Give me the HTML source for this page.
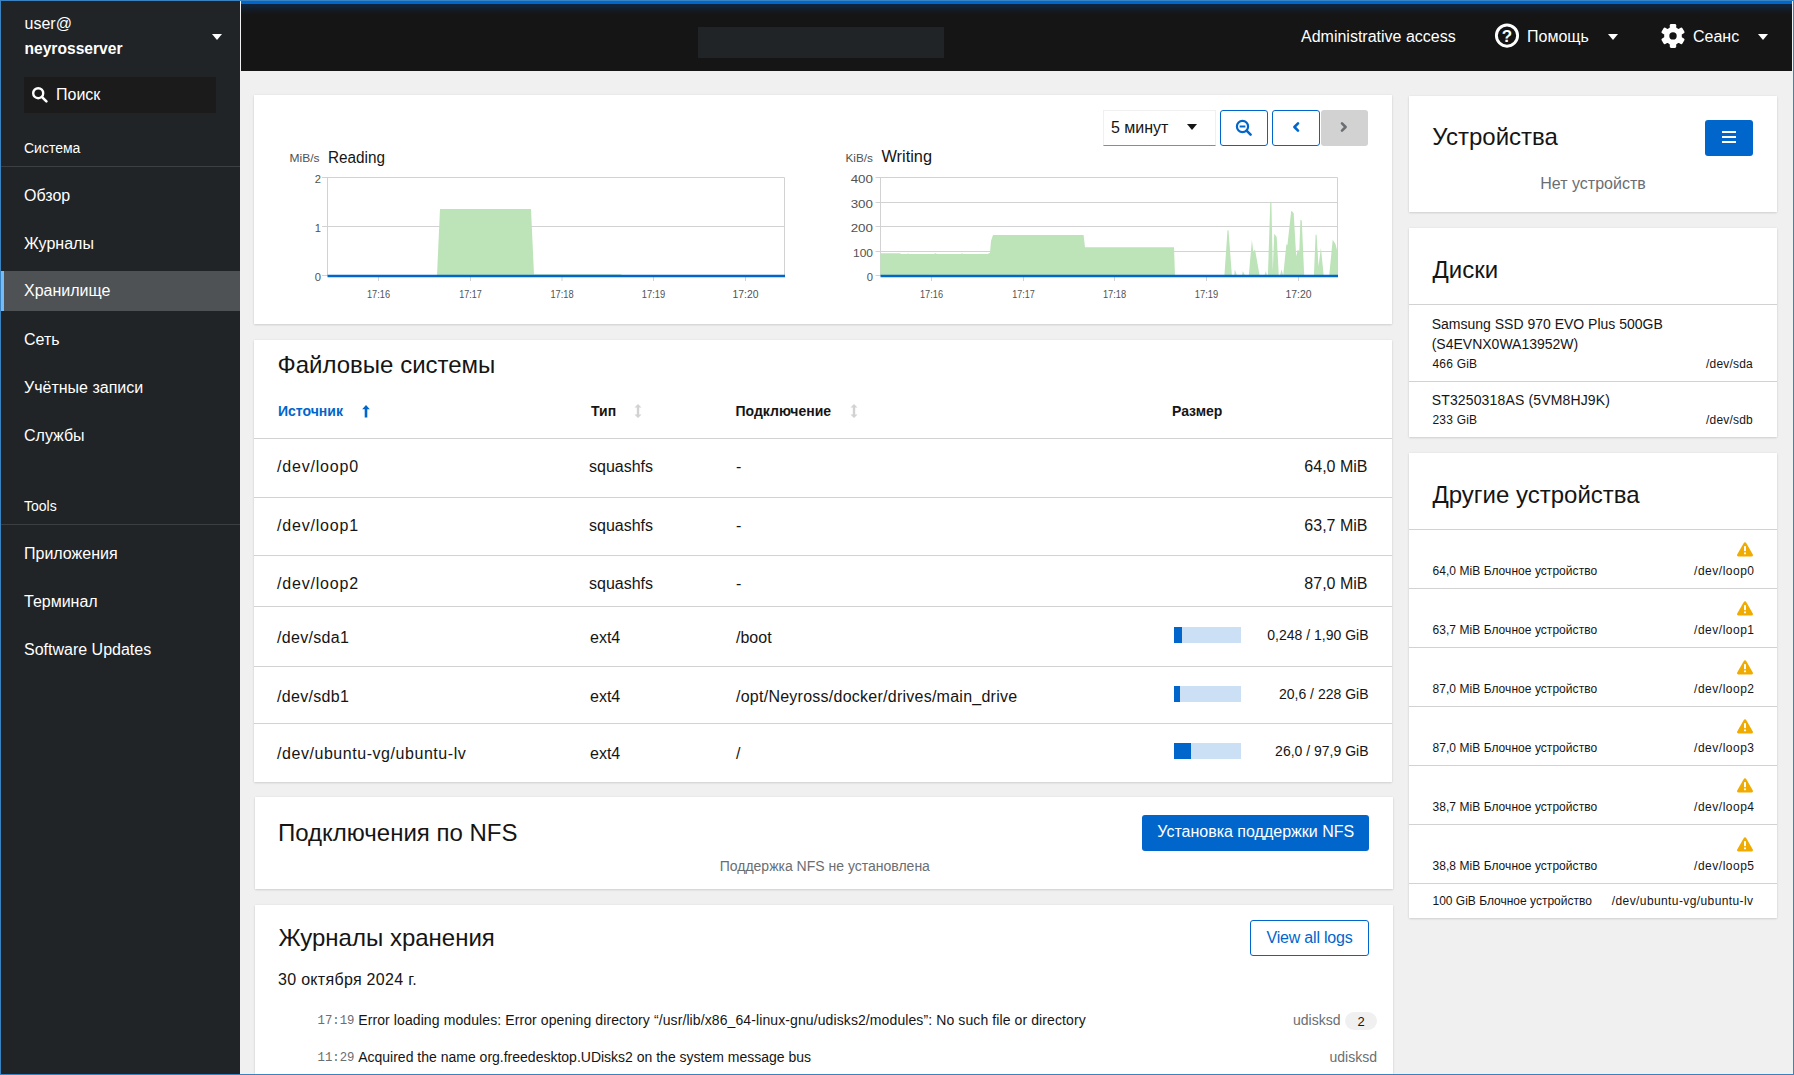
<!DOCTYPE html>
<html><head><meta charset="utf-8">
<style>
html,body{margin:0;padding:0}
body{width:1794px;height:1075px;overflow:hidden;position:relative;background:#3a83c3;font-family:"Liberation Sans",sans-serif;}
.a{position:absolute}
.t{position:absolute;white-space:nowrap;line-height:1;font-family:"Liberation Sans",sans-serif}
#win{position:absolute;left:0;top:0;width:1794px;height:1075px;background:#f0f0f0;overflow:hidden}
.bd{position:absolute;background:#3a83c3;z-index:50}
#side{position:absolute;left:1px;top:1px;width:239px;height:1073px;background:#212427}
#head{position:absolute;left:241px;top:1px;width:1551px;height:70px;background:#151515}
.card{position:absolute;background:#fff;box-shadow:0 1px 2px 0 rgba(3,3,3,.12),0 0 2px 0 rgba(3,3,3,.06)}
.nav{color:#fff;font-size:16px}
.hr{position:absolute;height:1px;background:#d2d2d2}
.g{color:#6a6e73}
</style></head>
<body>
<div id="win">
<!-- SIDEBAR -->
<div id="side">
  <div class="t nav" style="left:23.5px;top:15px;font-size:16px">user@</div>
  <div class="t nav" style="left:23.5px;top:39.5px;font-size:15.6px;font-weight:bold">neyrosserver</div>
  <svg class="a" style="left:210px;top:32px" width="12" height="8"><path d="M1 1h10L6 7z" fill="#fff"/></svg>
  <div class="a" style="left:23px;top:76px;width:192px;height:36px;background:#1b1b1b"></div>
  <svg class="a" style="left:30px;top:85px" width="18" height="18" viewBox="0 0 18 18"><circle cx="7.2" cy="7.2" r="5" fill="none" stroke="#fff" stroke-width="2.4"/><path d="M10.8 10.8l4.6 4.6" stroke="#fff" stroke-width="2.6" stroke-linecap="round"/></svg>
  <div class="t nav" style="left:55px;top:86px">Поиск</div>
  <div class="t nav" style="left:23px;top:140px;font-size:14px">Система</div>
  <div class="a" style="left:0;top:165px;width:239px;height:1px;background:#3c3f42"></div>
  <div class="t nav" style="left:23px;top:187px">Обзор</div>
  <div class="t nav" style="left:23px;top:235px">Журналы</div>
  <div class="a" style="left:0;top:270px;width:239px;height:40px;background:#4f5255"></div>
  <div class="a" style="left:0;top:270px;width:3px;height:40px;background:#73bcf7"></div>
  <div class="t nav" style="left:23px;top:281.5px">Хранилище</div>
  <div class="t nav" style="left:23px;top:331px">Сеть</div>
  <div class="t nav" style="left:23px;top:379px">Учётные записи</div>
  <div class="t nav" style="left:23px;top:427px">Службы</div>
  <div class="t nav" style="left:23px;top:498px;font-size:14px">Tools</div>
  <div class="a" style="left:0;top:523px;width:239px;height:1px;background:#3c3f42"></div>
  <div class="t nav" style="left:23px;top:545px">Приложения</div>
  <div class="t nav" style="left:23px;top:593px">Терминал</div>
  <div class="t nav" style="left:23px;top:641px">Software Updates</div>
</div>
<!-- HEADER -->
<div id="head">
  <div class="a" style="left:0;top:0;width:1551px;height:3px;background:#0066cc"></div>
  <div class="a" style="left:0;top:3px;width:1551px;height:10px;background:linear-gradient(#0f2440,#151515)"></div>
  <div class="a" style="left:457px;top:26px;width:246px;height:31px;background:#212427"></div>
  <div class="t" style="left:1060px;top:28px;color:#fff;font-size:16px">Administrative access</div>
  <svg class="a" style="left:1252px;top:22px" width="28" height="26" viewBox="0 0 28 26"><circle cx="14" cy="12.6" r="10.6" fill="none" stroke="#fff" stroke-width="2.9"/><text x="14" y="18.6" text-anchor="middle" font-family="Liberation Sans" font-weight="bold" font-size="17" fill="#fff">?</text></svg>
  <div class="t" style="left:1286px;top:28px;color:#fff;font-size:16px">Помощь</div>
  <svg class="a" style="left:1366px;top:32px" width="12" height="8"><path d="M1 1h10L6 7z" fill="#fff"/></svg>
  <svg class="a" style="left:1419px;top:21.4px" width="26" height="28" viewBox="-13 -13.9 26 28"><g fill="#fff"><circle r="8.9"/><rect x="-3.2" y="-12" width="6.4" height="6" rx="1.3" transform="rotate(0)"/><rect x="-3.2" y="-12" width="6.4" height="6" rx="1.3" transform="rotate(60)"/><rect x="-3.2" y="-12" width="6.4" height="6" rx="1.3" transform="rotate(120)"/><rect x="-3.2" y="-12" width="6.4" height="6" rx="1.3" transform="rotate(180)"/><rect x="-3.2" y="-12" width="6.4" height="6" rx="1.3" transform="rotate(240)"/><rect x="-3.2" y="-12" width="6.4" height="6" rx="1.3" transform="rotate(300)"/></g><circle r="3.7" fill="#151515"/></svg>
  <div class="t" style="left:1452px;top:28px;color:#fff;font-size:16px">Сеанс</div>
  <svg class="a" style="left:1516px;top:32px" width="12" height="8"><path d="M1 1h10L6 7z" fill="#fff"/></svg>
</div>
<!-- MAIN -->
<!-- CARD 1: charts -->
<div class="card" style="left:254px;top:95px;width:1138px;height:229px"></div>
<div class="a" style="left:1103px;top:110px;width:111px;height:34px;border:1px solid #f0f0f0;border-bottom-color:#8a8d90;background:#fff"></div>
<div class="t" style="left:1111px;top:120px;font-size:16px;color:#151515">5 минут</div>
<svg class="a" style="left:1186px;top:123px" width="12" height="8"><path d="M1 1h10L6 7z" fill="#151515"/></svg>
<div class="a" style="left:1220px;top:110px;width:46px;height:34px;border:1px solid #0066cc;border-radius:3px;background:#fff"></div>
<svg class="a" style="left:1234px;top:118px" width="20" height="20" viewBox="0 0 20 20"><circle cx="8.5" cy="8.5" r="5.6" fill="none" stroke="#0066cc" stroke-width="2.2"/><path d="M5.6 8.5h5.8" stroke="#0066cc" stroke-width="2"/><path d="M12.6 12.6l4 4" stroke="#0066cc" stroke-width="2.6" stroke-linecap="round"/></svg>
<div class="a" style="left:1272px;top:110px;width:46px;height:34px;border:1px solid #0066cc;border-radius:3px;background:#fff"></div>
<svg class="a" style="left:1290px;top:120px" width="12" height="14" viewBox="0 0 12 14"><path d="M8 3.4L4.4 7L8 10.6" fill="none" stroke="#0066cc" stroke-width="2.6" stroke-linecap="round" stroke-linejoin="round"/></svg>
<div class="a" style="left:1321px;top:110px;width:47px;height:36px;border-radius:3px;background:#d2d2d2"></div>
<svg class="a" style="left:1338px;top:120px" width="12" height="14" viewBox="0 0 12 14"><path d="M4 3.4L7.6 7L4 10.6" fill="none" stroke="#6a6e73" stroke-width="2.6" stroke-linecap="round" stroke-linejoin="round"/></svg>

<svg class="a" style="left:0;top:0" width="1794" height="1075" viewBox="0 0 1794 1075">
 <g font-family="Liberation Sans" fill="#4f5255" font-size="12">
  <text x="289.5" y="162" font-size="11.5" fill="#4f5255" textLength="30" lengthAdjust="spacingAndGlyphs">MiB/s</text>
  <text x="328" y="163" font-size="16" fill="#151515" textLength="57" lengthAdjust="spacingAndGlyphs">Reading</text>
  <text x="845.5" y="162" font-size="11.5" fill="#4f5255" textLength="27.5" lengthAdjust="spacingAndGlyphs">KiB/s</text>
  <text x="881.5" y="162" font-size="16" fill="#151515" textLength="50.5" lengthAdjust="spacingAndGlyphs">Writing</text>
 </g>
 <!-- reading chart -->
 <g stroke="#d2d2d2" stroke-width="1" fill="none">
  <path d="M322 177.5H784.5M322 226.5H784.5M322 275.5H784.5M327.5 177.5V275.5M784.5 177.5V275.5"/>
  <path d="M378.5 277V281M470.5 277V281M562 277V281M653.5 277V281M745.5 277V281"/>
 </g>
 <path fill="#bde3b9" d="M437 275.5L440 209H531L534 274.3H621L622 275.5Z"/>
 <path d="M327.5 276H785" stroke="#0066cc" stroke-width="2.6"/>
 <g font-family="Liberation Sans" fill="#4f5255" font-size="11.2" text-anchor="end">
  <text x="321" y="183">2</text><text x="321" y="232">1</text><text x="321" y="281">0</text>
 </g>
 <g font-family="Liberation Sans" fill="#4f5255" font-size="11" text-anchor="middle">
  <text textLength="23" lengthAdjust="spacingAndGlyphs" x="378.5" y="298">17:16</text><text textLength="22.5" lengthAdjust="spacingAndGlyphs" x="470.5" y="298">17:17</text><text textLength="23.2" lengthAdjust="spacingAndGlyphs" x="562" y="298">17:18</text><text textLength="23.4" lengthAdjust="spacingAndGlyphs" x="653.5" y="298">17:19</text><text textLength="26" lengthAdjust="spacingAndGlyphs" x="745.5" y="298">17:20</text>
 </g>
 <!-- writing chart -->
 <g stroke="#d2d2d2" stroke-width="1" fill="none">
  <path d="M875.5 177.5H1337.5M875.5 202.5H1337.5M875.5 226.5H1337.5M875.5 251.5H1337.5M875.5 275.5H1337.5M880.5 177.5V275.5M1337.5 177.5V275.5"/>
  <path d="M931.5 277V281M1023.5 277V281M1114.5 277V281M1206.5 277V281M1298.5 277V281"/>
 </g>
 <path fill="#bde3b9" d="M880.5 275.5V253.2H900L901 254H907.5L908 253.2L909 254H934L935.5 253.2L937 254H961L962 253.2L963 254H987.7L990 252.7L991 241L993 235.1H1083.6L1085 247.2H1174L1175 275.5Z
 M1224.4 275.5L1227.5 230.2L1228.5 230.2L1231.9 275.5Z M1234.2 275.5L1234.8 269.6L1237 275.5Z M1242 275.5L1242.8 271L1245 275.5Z
 M1248.8 275.5L1251.9 240.1L1253.3 252L1255 249.4L1259.6 275.5Z M1264.5 275.5L1265.8 271L1267 275.5Z
 M1267.9 275.5L1270.3 202.3L1271.4 202.3L1272.8 271L1274.2 233.8L1276.7 236.9L1278.8 275.5Z M1280 275.5L1281.5 269.5L1283.2 275.5Z
 M1283.2 275.5L1286.4 244.1L1287.4 245.2L1291.2 211.1L1292 211.3L1293.7 213.2L1296.2 256.4L1297.6 250.1L1299.3 250.8L1300.4 219.9L1301.3 219.9L1301.8 220.9L1304.2 275.5Z
 M1313.9 275.5L1315.6 234.8L1316.6 234.8L1318.5 266.2L1320.9 248L1323.7 275.5Z M1329.2 275.5L1332.7 239.7L1335.5 243.9L1337 250V275.5Z"/>
 <path d="M880.5 276H1338" stroke="#0066cc" stroke-width="2.6"/>
 <g font-family="Liberation Sans" fill="#4f5255" font-size="11.2" text-anchor="end">
  <text x="873" y="183.2" textLength="22.3" lengthAdjust="spacingAndGlyphs">400</text><text x="873" y="207.6" textLength="22.3" lengthAdjust="spacingAndGlyphs">300</text><text x="873" y="232" textLength="22.3" lengthAdjust="spacingAndGlyphs">200</text><text x="873" y="256.6" textLength="20" lengthAdjust="spacingAndGlyphs">100</text><text x="873" y="281">0</text>
 </g>
 <g font-family="Liberation Sans" fill="#4f5255" font-size="11" text-anchor="middle">
  <text textLength="23" lengthAdjust="spacingAndGlyphs" x="931.5" y="298">17:16</text><text textLength="22.5" lengthAdjust="spacingAndGlyphs" x="1023.5" y="298">17:17</text><text textLength="23.2" lengthAdjust="spacingAndGlyphs" x="1114.5" y="298">17:18</text><text textLength="23.4" lengthAdjust="spacingAndGlyphs" x="1206.5" y="298">17:19</text><text textLength="26" lengthAdjust="spacingAndGlyphs" x="1298.5" y="298">17:20</text>
 </g>
</svg>

<!-- CARD 2: filesystems -->
<div class="card" style="left:254px;top:340px;width:1138px;height:442px"></div>
<div class="t" style="left:277.5px;top:353px;font-size:24px;color:#151515">Файловые системы</div>
<div class="t" style="left:278px;top:404px;font-size:14px;font-weight:bold;color:#0066cc">Источник</div>
<svg class="a" style="left:361px;top:404px" width="10" height="15" viewBox="0 0 10 15"><path d="M5 1L1.2 5.2h2.5V13.6h2.6V5.2h2.5z" fill="#0066cc"/></svg>
<div class="t" style="left:591px;top:404px;font-size:14px;font-weight:bold;color:#151515">Тип</div>
<svg class="a" style="left:633px;top:403px" width="10" height="16" viewBox="0 0 10 16"><path d="M5 1L1.5 4.6h2.3v6.8H1.5L5 15l3.5-3.6H6.2V4.6h2.3z" fill="#d2d2d2"/></svg>
<div class="t" style="left:735.5px;top:404px;font-size:14px;font-weight:bold;color:#151515">Подключение</div>
<svg class="a" style="left:849px;top:403px" width="10" height="16" viewBox="0 0 10 16"><path d="M5 1L1.5 4.6h2.3v6.8H1.5L5 15l3.5-3.6H6.2V4.6h2.3z" fill="#d2d2d2"/></svg>
<div class="t" style="left:1172px;top:404px;font-size:14px;font-weight:bold;color:#151515">Размер</div>
<div class="hr" style="left:254px;top:438px;width:1138px"></div>
<div class="hr" style="left:254px;top:497px;width:1138px"></div>
<div class="hr" style="left:254px;top:555px;width:1138px"></div>
<div class="hr" style="left:254px;top:606px;width:1138px"></div>
<div class="hr" style="left:254px;top:666px;width:1138px"></div>
<div class="hr" style="left:254px;top:723px;width:1138px"></div>
<div style="color:#151515;font-size:16px">
<div class="t" style="left:277px;top:458.5px;letter-spacing:.8px">/dev/loop0</div>
<div class="t" style="left:589px;top:458.5px">squashfs</div>
<div class="t" style="left:736px;top:458.5px">-</div>
<div class="t" style="right:426.5px;top:458.5px">64,0 MiB</div>
<div class="t" style="left:277px;top:517.5px;letter-spacing:.8px">/dev/loop1</div>
<div class="t" style="left:589px;top:517.5px">squashfs</div>
<div class="t" style="left:736px;top:517.5px">-</div>
<div class="t" style="right:426.5px;top:517.5px">63,7 MiB</div>
<div class="t" style="left:277px;top:575.5px;letter-spacing:.8px">/dev/loop2</div>
<div class="t" style="left:589px;top:575.5px">squashfs</div>
<div class="t" style="left:736px;top:575.5px">-</div>
<div class="t" style="right:426.5px;top:575.5px">87,0 MiB</div>
<div class="t" style="left:277px;top:629.5px;letter-spacing:.3px">/dev/sda1</div>
<div class="t" style="left:590px;top:629.5px">ext4</div>
<div class="t" style="left:736px;top:629.5px">/boot</div>
<div class="t" style="left:277px;top:688.5px;letter-spacing:.3px">/dev/sdb1</div>
<div class="t" style="left:590px;top:688.5px">ext4</div>
<div class="t" style="left:736px;top:688.5px;letter-spacing:.25px">/opt/Neyross/docker/drives/main_drive</div>
<div class="t" style="left:277px;top:746px;letter-spacing:.55px">/dev/ubuntu-vg/ubuntu-lv</div>
<div class="t" style="left:590px;top:746px">ext4</div>
<div class="t" style="left:736px;top:746px">/</div>
</div>
<div class="a" style="left:1174px;top:627px;width:67px;height:16px;background:#cce0f5"></div><div class="a" style="left:1174px;top:627px;width:8px;height:16px;background:#0066cc"></div>
<div class="a" style="left:1174px;top:686px;width:67px;height:16px;background:#cce0f5"></div><div class="a" style="left:1174px;top:686px;width:6px;height:16px;background:#0066cc"></div>
<div class="a" style="left:1174px;top:743px;width:67px;height:16px;background:#cce0f5"></div><div class="a" style="left:1174px;top:743px;width:17px;height:16px;background:#0066cc"></div>
<div style="color:#151515;font-size:14px">
<div class="t" style="right:425.5px;top:628px">0,248 / 1,90 GiB</div>
<div class="t" style="right:425.5px;top:687px">20,6 / 228 GiB</div>
<div class="t" style="right:425.5px;top:744px">26,0 / 97,9 GiB</div>
</div>

<!-- CARD 3: NFS -->
<div class="card" style="left:255px;top:797px;width:1138px;height:92px"></div>
<div class="t" style="left:278px;top:820.5px;font-size:24px;color:#151515">Подключения по NFS</div>
<div class="a" style="left:1142px;top:815px;width:227px;height:36px;background:#0066cc;border-radius:3px"></div>
<div class="t" style="left:1157.3px;top:824.2px;font-size:16px;color:#fff">Установка поддержки NFS</div>
<div class="t g" style="left:719.7px;top:858.8px;font-size:14px">Поддержка NFS не установлена</div>
<!-- CARD 4: logs -->
<div class="card" style="left:255px;top:905px;width:1138px;height:220px"></div>
<div class="t" style="left:278.4px;top:926.2px;font-size:24px;color:#151515">Журналы хранения</div>
<div class="a" style="left:1250px;top:920px;width:117px;height:34px;border:1px solid #0066cc;border-radius:3px"></div>
<div class="t" style="left:1266.5px;top:929.6px;font-size:16px;color:#0066cc;letter-spacing:-.2px">View all logs</div>
<div class="t" style="left:278px;top:971.7px;font-size:16px;color:#151515;letter-spacing:.3px">30 октября 2024 г.</div>
<div class="t" style="left:317.5px;top:1014.8px;font-size:12.3px;font-family:'Liberation Mono',monospace;color:#6a6e73">17:19</div>
<div class="t" style="left:358.2px;top:1013.4px;font-size:14px;color:#151515;letter-spacing:.1px">Error loading modules: Error opening directory “/usr/lib/x86_64-linux-gnu/udisks2/modules”: No such file or directory</div>
<div class="t g" style="right:453.5px;top:1013.4px;font-size:14px">udisksd</div>
<div class="a" style="left:1345px;top:1012px;width:32px;height:18px;border-radius:9px;background:#f0f0f0"></div>
<div class="t" style="left:1345px;width:32px;text-align:center;top:1014.5px;font-size:13px;color:#151515">2</div>
<div class="t" style="left:317.5px;top:1051.5px;font-size:12.3px;font-family:'Liberation Mono',monospace;color:#6a6e73">11:29</div>
<div class="t" style="left:358.2px;top:1050.1px;font-size:14px;color:#151515">Acquired the name org.freedesktop.UDisks2 on the system message bus</div>
<div class="t g" style="right:417px;top:1050.1px;font-size:14px">udisksd</div>

<!-- RIGHT R1 -->
<div class="card" style="left:1409px;top:96px;width:368px;height:116px"></div>
<div class="t" style="left:1432.3px;top:125.4px;font-size:24px;color:#151515">Устройства</div>
<div class="a" style="left:1705px;top:120px;width:48px;height:36px;background:#0066cc;border-radius:3px"></div>
<div class="a" style="left:1722px;top:131px;width:14px;height:2px;background:#fff"></div>
<div class="a" style="left:1722px;top:136px;width:14px;height:2px;background:#fff"></div>
<div class="a" style="left:1722px;top:141px;width:14px;height:2px;background:#fff"></div>
<div class="t g" style="left:1540.3px;top:175.5px;font-size:16px">Нет устройств</div>
<!-- RIGHT R2 -->
<div class="card" style="left:1409px;top:228px;width:368px;height:209px"></div>
<div class="t" style="left:1432.6px;top:258.3px;font-size:24px;color:#151515">Диски</div>
<div class="hr" style="left:1409px;top:304px;width:368px"></div>
<div class="t" style="left:1431.7px;top:316.6px;font-size:14px;color:#151515">Samsung SSD 970 EVO Plus 500GB</div>
<div class="t" style="left:1431.7px;top:337.1px;font-size:14px;color:#151515">(S4EVNX0WA13952W)</div>
<div class="t" style="left:1432.5px;top:357.8px;font-size:12px;color:#151515;letter-spacing:.2px">466 GiB</div>
<div class="t" style="right:41px;top:357.8px;font-size:12px;color:#151515;letter-spacing:.2px">/dev/sda</div>
<div class="hr" style="left:1409px;top:381px;width:368px"></div>
<div class="t" style="left:1431.7px;top:393.3px;font-size:14px;color:#151515;letter-spacing:.15px">ST3250318AS (5VM8HJ9K)</div>
<div class="t" style="left:1432.5px;top:414px;font-size:12px;color:#151515;letter-spacing:.2px">233 GiB</div>
<div class="t" style="right:41px;top:414px;font-size:12px;color:#151515;letter-spacing:.2px">/dev/sdb</div>
<!-- RIGHT R3 -->
<div class="card" style="left:1409px;top:453px;width:368px;height:465px"></div>
<div class="t" style="left:1432.5px;top:483px;font-size:24px;color:#151515">Другие устройства</div>
<div class="hr" style="left:1409px;top:529px;width:368px"></div>
<svg class="a" style="left:1736px;top:541px" width="18" height="16" viewBox="0 0 18 16"><path d="M9 1.2c.5 0 .9.3 1.2.7l6.6 11.6c.5.9-.1 1.9-1.1 1.9H2.3c-1 0-1.6-1-1.1-1.9L7.8 1.9c.3-.4.7-.7 1.2-.7z" fill="#f0ab00"/><rect x="8" y="5" width="2" height="5.2" rx=".6" fill="#fff"/><circle cx="9" cy="12.3" r="1.1" fill="#fff"/></svg>
<div class="t" style="left:1432.5px;top:565.34px;font-size:12px;color:#151515;letter-spacing:.05px">64,0 MiB Блочное устройство</div>
<div class="t" style="right:39.5px;top:565.34px;font-size:12px;color:#151515;letter-spacing:.5px">/dev/loop0</div>
<div class="hr" style="left:1409px;top:588px;width:368px"></div>
<svg class="a" style="left:1736px;top:600px" width="18" height="16" viewBox="0 0 18 16"><path d="M9 1.2c.5 0 .9.3 1.2.7l6.6 11.6c.5.9-.1 1.9-1.1 1.9H2.3c-1 0-1.6-1-1.1-1.9L7.8 1.9c.3-.4.7-.7 1.2-.7z" fill="#f0ab00"/><rect x="8" y="5" width="2" height="5.2" rx=".6" fill="#fff"/><circle cx="9" cy="12.3" r="1.1" fill="#fff"/></svg>
<div class="t" style="left:1432.5px;top:624.34px;font-size:12px;color:#151515;letter-spacing:.05px">63,7 MiB Блочное устройство</div>
<div class="t" style="right:39.5px;top:624.34px;font-size:12px;color:#151515;letter-spacing:.5px">/dev/loop1</div>
<div class="hr" style="left:1409px;top:647px;width:368px"></div>
<svg class="a" style="left:1736px;top:659px" width="18" height="16" viewBox="0 0 18 16"><path d="M9 1.2c.5 0 .9.3 1.2.7l6.6 11.6c.5.9-.1 1.9-1.1 1.9H2.3c-1 0-1.6-1-1.1-1.9L7.8 1.9c.3-.4.7-.7 1.2-.7z" fill="#f0ab00"/><rect x="8" y="5" width="2" height="5.2" rx=".6" fill="#fff"/><circle cx="9" cy="12.3" r="1.1" fill="#fff"/></svg>
<div class="t" style="left:1432.5px;top:683.34px;font-size:12px;color:#151515;letter-spacing:.05px">87,0 MiB Блочное устройство</div>
<div class="t" style="right:39.5px;top:683.34px;font-size:12px;color:#151515;letter-spacing:.5px">/dev/loop2</div>
<div class="hr" style="left:1409px;top:706px;width:368px"></div>
<svg class="a" style="left:1736px;top:718px" width="18" height="16" viewBox="0 0 18 16"><path d="M9 1.2c.5 0 .9.3 1.2.7l6.6 11.6c.5.9-.1 1.9-1.1 1.9H2.3c-1 0-1.6-1-1.1-1.9L7.8 1.9c.3-.4.7-.7 1.2-.7z" fill="#f0ab00"/><rect x="8" y="5" width="2" height="5.2" rx=".6" fill="#fff"/><circle cx="9" cy="12.3" r="1.1" fill="#fff"/></svg>
<div class="t" style="left:1432.5px;top:742.34px;font-size:12px;color:#151515;letter-spacing:.05px">87,0 MiB Блочное устройство</div>
<div class="t" style="right:39.5px;top:742.34px;font-size:12px;color:#151515;letter-spacing:.5px">/dev/loop3</div>
<div class="hr" style="left:1409px;top:765px;width:368px"></div>
<svg class="a" style="left:1736px;top:777px" width="18" height="16" viewBox="0 0 18 16"><path d="M9 1.2c.5 0 .9.3 1.2.7l6.6 11.6c.5.9-.1 1.9-1.1 1.9H2.3c-1 0-1.6-1-1.1-1.9L7.8 1.9c.3-.4.7-.7 1.2-.7z" fill="#f0ab00"/><rect x="8" y="5" width="2" height="5.2" rx=".6" fill="#fff"/><circle cx="9" cy="12.3" r="1.1" fill="#fff"/></svg>
<div class="t" style="left:1432.5px;top:801.34px;font-size:12px;color:#151515;letter-spacing:.05px">38,7 MiB Блочное устройство</div>
<div class="t" style="right:39.5px;top:801.34px;font-size:12px;color:#151515;letter-spacing:.5px">/dev/loop4</div>
<div class="hr" style="left:1409px;top:824px;width:368px"></div>
<svg class="a" style="left:1736px;top:836px" width="18" height="16" viewBox="0 0 18 16"><path d="M9 1.2c.5 0 .9.3 1.2.7l6.6 11.6c.5.9-.1 1.9-1.1 1.9H2.3c-1 0-1.6-1-1.1-1.9L7.8 1.9c.3-.4.7-.7 1.2-.7z" fill="#f0ab00"/><rect x="8" y="5" width="2" height="5.2" rx=".6" fill="#fff"/><circle cx="9" cy="12.3" r="1.1" fill="#fff"/></svg>
<div class="t" style="left:1432.5px;top:860.34px;font-size:12px;color:#151515;letter-spacing:.05px">38,8 MiB Блочное устройство</div>
<div class="t" style="right:39.5px;top:860.34px;font-size:12px;color:#151515;letter-spacing:.5px">/dev/loop5</div>
<div class="hr" style="left:1409px;top:883px;width:368px"></div>
<div class="t" style="left:1432.5px;top:894.8px;font-size:12px;color:#151515">100 GiB Блочное устройство</div>
<div class="t" style="right:40.5px;top:894.8px;font-size:12px;color:#151515;letter-spacing:.4px">/dev/ubuntu-vg/ubuntu-lv</div>


<!--CARDS-->
<div class="bd" style="left:0;top:0;width:1794px;height:1px"></div><div class="bd" style="left:0;top:0;width:1px;height:1075px"></div><div class="bd" style="left:1793px;top:0;width:1px;height:1075px"></div><div class="bd" style="left:0;top:1074px;width:1794px;height:1px"></div>
</div>
</body></html>
